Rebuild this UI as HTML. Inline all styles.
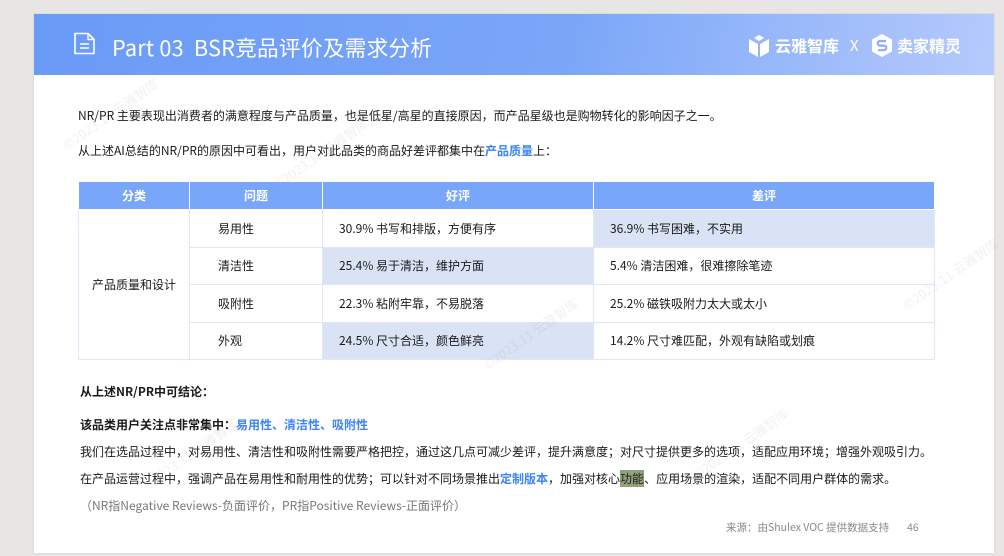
<!DOCTYPE html>
<html><head><meta charset="utf-8"><style>
*{margin:0;padding:0;box-sizing:border-box}
body{width:1004px;height:556px;background:#e8e5e5;position:relative;overflow:hidden;font-family:"Liberation Sans","Noto Sans CJK SC",sans-serif;color:#1a1a1a}
.page{position:absolute;left:34px;top:14px;width:960px;height:539px;background:#fff;box-shadow:0 0 2px #ccc}
.hdr{position:absolute;left:0;top:0;width:960px;height:61px;background:linear-gradient(100deg,#6a9bf7 0%,#7aa6f8 55%,#b6cafc 100%)}
.title{position:absolute;left:78px;top:18px;font-size:21.7px;color:#fff;font-family:"Noto Sans CJK SC",sans-serif;letter-spacing:0.2px}
.t{position:absolute;font-size:12px;white-space:nowrap;font-family:"Noto Sans CJK SC",sans-serif}
.b{font-weight:bold}
.blue{color:#3d85f5;font-weight:bold}
table{position:absolute;left:44px;top:167px;border-collapse:collapse;font-family:"Noto Sans CJK SC",sans-serif;font-size:12px}
td,th{border:1px solid #dfe6f5;height:37.5px;padding:0;text-align:left}
th{background:#78a6fb;color:#fff;height:28px;text-align:center;font-weight:bold;font-size:12px;border-color:#fff}
.hl{background:#d9e3f5}
.wm{position:absolute;color:rgba(150,150,150,0.13);font-size:13px;transform:rotate(-35deg);white-space:nowrap;font-family:"Noto Sans CJK SC",sans-serif}
</style></head><body>
<div class="page">
<div class="hdr">
<svg style="position:absolute;left:39px;top:17px" width="24" height="25" viewBox="0 0 24 25"><path d="M2 2.5h13l6 6v14H2z" fill="none" stroke="#fff" stroke-width="1.6" stroke-linejoin="round"/><path d="M15 2.5v6h6" fill="none" stroke="#fff" stroke-width="1.4"/><path d="M7 13h9M7 17h9" stroke="#fff" stroke-width="1.6"/></svg>
<div class="title">Part 03&nbsp; BSR竞品评价及需求分析</div>
<svg style="position:absolute;left:714px;top:20px" width="22" height="24" viewBox="0 0 22 24"><path d="M11 1l5 3-5 3-5-3z" fill="#fff"/><path d="M1 5l9 5v13L1 18z" fill="#fff"/><path d="M21 5l-9 5v13l9-5z" fill="#fff"/></svg>
<div class="t" style="left:741px;top:19px;font-size:16px;color:#fff;font-weight:bold">云雅智库</div>
<div class="t" style="left:816px;top:21px;font-size:15px;color:#fff">X</div>
<svg style="position:absolute;left:837px;top:19px" width="22" height="25" viewBox="0 0 22 25"><path d="M11 1l10 5.5v12L11 24 1 18.5v-12z" fill="#fff"/><path d="M15 8H9a2.3 2.3 0 000 4.6h4a2.3 2.3 0 010 4.6H7" fill="none" stroke="#8aaefa" stroke-width="2.2"/></svg>
<div class="t" style="left:863px;top:19px;font-size:16px;color:#fff;font-weight:bold">卖家精灵</div>
</div>
<div class="t" style="left:44px;top:93px">NR/PR 主要表现出消费者的满意程度与产品质量，也是低星/高星的直接原因，而产品星级也是购物转化的影响因子之一。</div>
<div class="t" style="left:44px;top:128px">从上述AI总结的NR/PR的原因中可看出，用户对此品类的商品好差评都集中在<span class="blue">产品质量</span>上：</div>
<table>
<tr><th style="width:111px">分类</th><th style="width:133px">问题</th><th style="width:271px">好评</th><th style="width:341px">差评</th></tr>
<tr><td rowspan="4" style="text-align:center">产品质量和设计</td><td style="padding-left:28px">易用性</td><td style="padding-left:16px">30.9% 书写和排版，方便有序</td><td class="hl" style="padding-left:16px">36.9% 书写困难，不实用</td></tr>
<tr><td style="padding-left:28px">清洁性</td><td class="hl" style="padding-left:16px">25.4% 易于清洁，维护方面</td><td style="padding-left:16px">5.4% 清洁困难，很难擦除笔迹</td></tr>
<tr><td style="padding-left:28px">吸附性</td><td style="padding-left:16px">22.3% 粘附牢靠，不易脱落</td><td style="padding-left:16px">25.2% 磁铁吸附力太大或太小</td></tr>
<tr><td style="padding-left:28px">外观</td><td class="hl" style="padding-left:16px">24.5% 尺寸合适，颜色鲜亮</td><td style="padding-left:16px">14.2% 尺寸难匹配，外观有缺陷或划痕</td></tr>
</table>
<div class="t b" style="left:46px;top:369px">从上述NR/PR中可结论：</div>
<div class="t b" style="left:46px;top:402px">该品类用户关注点非常集中：<span class="blue">易用性、清洁性、吸附性</span></div>
<div class="t" style="left:46px;top:429px">我们在选品过程中，对易用性、清洁性和吸附性需要严格把控，通过这几点可减少差评，提升满意度；对尺寸提供更多的选项，适配应用环境；增强外观吸引力。</div>
<div class="t" style="left:46px;top:456px">在产品运营过程中，强调产品在易用性和耐用性的优势；可以针对不同场景推出<span class="blue">定制版本</span>，加强对核心<span style="background:#8fa27a;color:#222">功能</span>、应用场景的渲染，适配不同用户群体的需求。</div>
<div class="t" style="left:46px;top:483px;color:#777">（NR指Negative Reviews-负面评价，PR指Positive Reviews-正面评价）</div>
<div class="t" style="left:692px;top:506px;font-size:10.5px;color:#888">来源：由Shulex VOC 提供数据支持</div>
<div class="t" style="left:873px;top:506px;font-size:10.5px;color:#888">46</div>
<div class="wm" style="left:20px;top:90px">©2023.11 云雅智库</div>
<div class="wm" style="left:230px;top:130px">©2023.11 云雅智库</div>
<div class="wm" style="left:440px;top:310px">©2023.11 云雅智库</div>
<div class="wm" style="left:650px;top:420px">©2023.11 云雅智库</div>
<div class="wm" style="left:860px;top:250px">©2023.11 云雅智库</div>
<div class="wm" style="left:100px;top:430px">©2023.11 云雅智库</div>
</div>
</body></html>
